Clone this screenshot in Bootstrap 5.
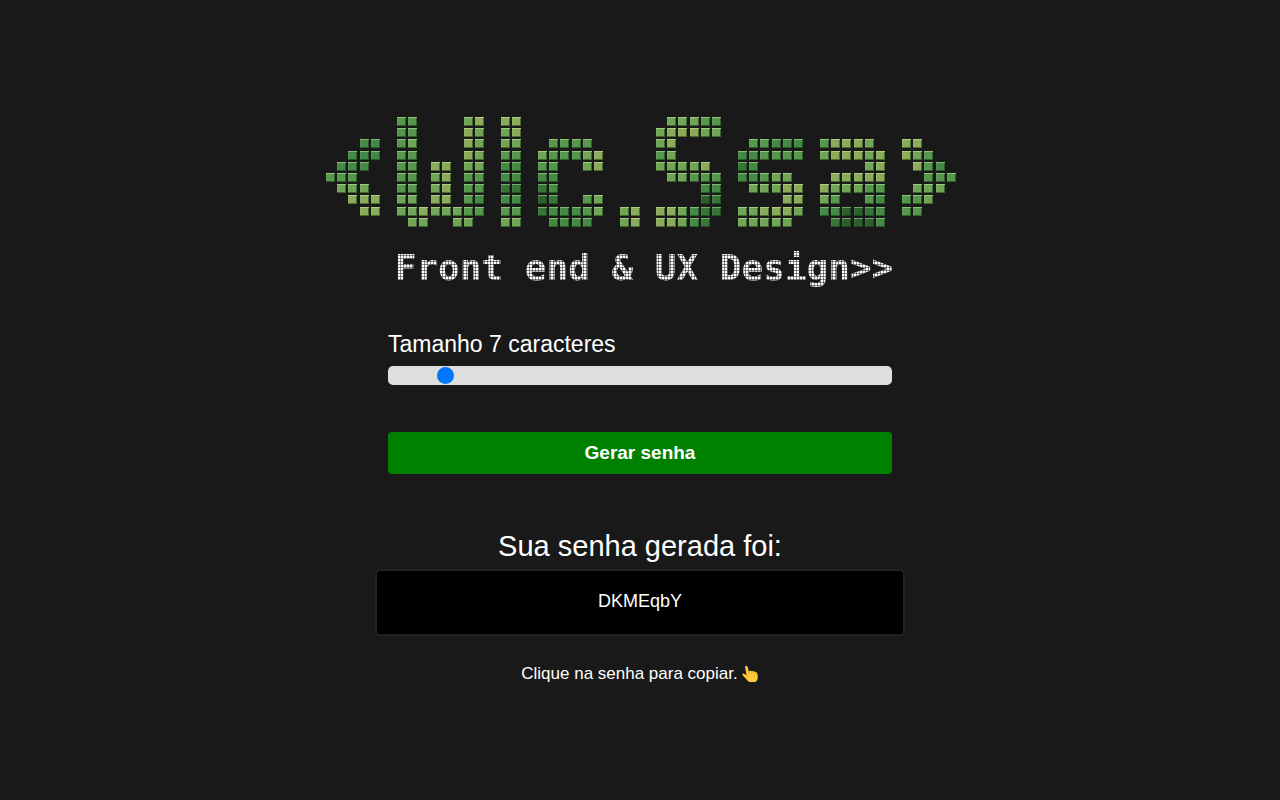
<!DOCTYPE html>
<html lang="pt-BR">
<head>
<meta charset="utf-8">
<meta name="viewport" content="width=device-width, initial-scale=1">
<title>Gerador de senha</title>
<link href="https://cdn.jsdelivr.net/npm/bootstrap@5.3.0/dist/css/bootstrap.min.css" rel="stylesheet">
<style>
  body { background: #191919; color: #fff; font-family: "Liberation Sans", Arial, sans-serif; }
  .page-shell { max-width: 636px; }
  .tool-col { max-width: 530px; }
  .field-col { padding: 0 13px; }
  .tagline {
    font: bold 36px/48px "DejaVu Sans Mono", monospace;
    white-space: nowrap;
    margin: 16px 0 38px 8px;
    color: transparent;
    background:
      linear-gradient(90deg, transparent 2px, rgba(25,25,25,.5) 2px) 0 0 / 3px 3px,
      linear-gradient(transparent 2px, rgba(25,25,25,.5) 2px) 0 0 / 3px 3px,
      #fff;
    -webkit-background-clip: text;
    background-clip: text;
  }
  .size-label { font-size: 23px; line-height: 28px; }
  .size-range { appearance: none; -webkit-appearance: none; height: 19px; background: #dedede; border-radius: 5px; }
  .size-range::-webkit-slider-runnable-track { background: transparent; height: 17px; }
  .size-range::-webkit-slider-thumb { width: 17px; height: 17px; margin-top: 0; background: #0075ff; }
  .size-range::-moz-range-track { background: transparent; }
  .size-range::-moz-range-thumb { width: 17px; height: 17px; background: #0075ff; }
  .btn-generate { background: #008000; color: #fff; font-size: 19px; line-height: 22px; padding: 10px; border: 0; border-radius: 4px; margin: 47px 0 55px; }
  .btn-generate:hover { background: #006b00; color: #fff; }
  .result-title { font-size: 29px; line-height: 34px; margin-bottom: 6px; }
  .result-box { background: #000; color: #fff; border: 2px solid #222; border-radius: 5px; font-size: 18px; line-height: 20px; padding: 20px 16px 23px; }
  .copy-tip { font-size: 17px; line-height: 20px; margin-top: 28px; }
</style>
</head>
<body>
<main class="page-shell container-fluid p-0 min-vh-100 d-flex flex-column align-items-center justify-content-center">
  <svg id="logo" class="w-100 d-block" viewBox="0 0 636 111" role="img" aria-label="Logo">
    <defs>
      <g id="bevel">
        <path d="M0 0h9v1H0z" fill="#e4ffc0" fill-opacity=".4"/>
        <path d="M0 1h1v8H0z" fill="#fff" fill-opacity=".08"/>
        <path d="M8 1h1v8H0V8h8z" fill="#10280c" fill-opacity=".5"/>
      </g>
    </defs>
  </svg>
  <div class="tagline">Front end &amp; UX Design&gt;&gt;</div>

  <div class="tool-col w-100">
    <div class="field-col">
      <label for="size" class="size-label d-block mb-2">Tamanho <span id="sizeValue">7</span> caracteres</label>
      <input type="range" class="form-range size-range d-block" id="size" min="5" max="25" value="7">
      <button type="button" class="btn btn-generate w-100 fw-bold" id="generate">Gerar senha</button>
    </div>
    <div class="text-center">
      <label for="password" class="result-title d-block">Sua senha gerada foi:</label>
      <button type="button" class="btn result-box w-100 d-block" id="password">DKMEqbY</button>
      <p class="copy-tip mb-0 d-flex justify-content-center align-items-center gap-1">
        <span>Clique na senha para copiar.</span>
        <svg width="17" height="18" viewBox="0 0 18 18" aria-hidden="true">
          <path d="M3.2 1.600C3 .4 5.600-.2 6 1.400l1.200 5c.5-.9 1.700-1 2.300-.2.7-.7 1.900-.6 2.400.2.8-.5 2-.2 2.300.7 1-.1 1.800.4 2 1.300l.5 3.200c.4 2.500-.8 5.500-3.200 6H8.700c-1.300 0-2.300-.8-3.100-1.900L.7 10.300c-.8-1 .4-2.300 1.600-1.600l2.500 1.500z" fill="#ffca3a"/>
          <path d="M7.200 6.500l.6 2.300M9.600 6.300l.5 2.200M12 6.600l.4 2M14.300 7.300l.3 1.700M4.800 10.200c.7.8 1 1.700.9 2.600" fill="none" stroke="#eda627" stroke-width=".8" stroke-linecap="round"/>
        </svg>
      </p>
    </div>
  </div>
</main>
<script src="https://cdn.jsdelivr.net/npm/bootstrap@5.3.0/dist/js/bootstrap.bundle.min.js"></script>
<script>
  // Mosaic logo: each block is a left edge, a first row and rows of shades (1 dark, 6 light).
  const shades = ['', '#2b602c', '#357637', '#438a44', '#55984c', '#6fa555', '#8aac5a'];
  const blocks = [
    [4, 2, '...33 ..333 .333. 444.. .555. ..666 ...66'],
    [75, 0, '44....56 44....65 45....65 44....65 44.66.55 44.56.44 44.56.44 55.66.43 55655544 .55..55.'],
    [179, 0, '66 56 55 44 33 33 22 33 44 55'],
    [216, 2, '.4444. 544456 44..56 33.... 23.... 12..45 233345 .3333.'],
    [298, 8, '56 56'],
    [334, 0, '.55544 566655 56 45 55556. .55444 ....33 ....12 665322 66532.'],
    [416, 2, '.44333 334444 23 33455. .55566 ....66 556665 55555.'],
    [498, 2, '46665. 566656 ....56 .66666 655544 54..43 331123 .21113'],
    [580, 2, '66 654 .643 ..444 .555 445 44']
  ];
  let tiles = '';
  for (const [left, top, rows] of blocks) {
    rows.split(' ').forEach((row, r) => [...row].forEach((shade, c) => {
      if (shade === '.') return;
      const x = left + Math.round(c * 11.2), y = Math.round((top + r) * 11.2);
      tiles += `<rect x="${x}" y="${y}" width="9" height="9" fill="${shades[shade]}"/><use href="#bevel" x="${x}" y="${y}"/>`;
    }));
  }
  document.getElementById('logo').insertAdjacentHTML('beforeend', tiles);

  const size = document.getElementById('size');
  const password = document.getElementById('password');
  size.addEventListener('input', () => { document.getElementById('sizeValue').textContent = size.value; });
  document.getElementById('generate').addEventListener('click', () => {
    const chars = 'ABCDEFGHIJKLMNOPQRSTUVWXYZabcdefghijklmnopqrstuvwxyz0123456789';
    password.textContent = Array.from({ length: +size.value }, () => chars[Math.floor(Math.random() * chars.length)]).join('');
  });
  password.addEventListener('click', () => navigator.clipboard.writeText(password.textContent));
</script>
</body>
</html>
